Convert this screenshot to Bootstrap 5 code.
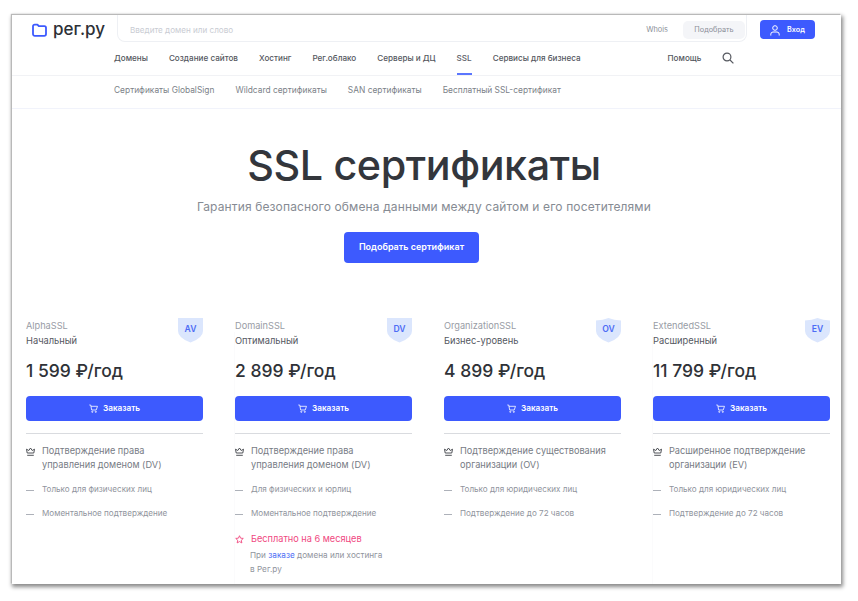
<!DOCTYPE html>
<html lang="ru"><head><meta charset="utf-8">
<link href="https://cdn.jsdelivr.net/npm/bootstrap@5.3.0/dist/css/bootstrap.min.css" rel="stylesheet">
<style>
html,body{height:100%;background:#fff;overflow:hidden}
body{font-family:Inter,"Liberation Sans",sans-serif;color:#2d3036;padding:15px 0 0 12px}
.shot{width:829px;height:569px;overflow:hidden;background:#fff;box-shadow:-1px -1px 1px #b9b9b9,1px 2px 4px 1px #8a8a8a}
.top-row{height:31px;padding-left:20px}
.logo{width:85px;font-size:17px;font-weight:500;line-height:1;gap:6px;color:#2d3036;margin-top:-2px}
.search-box{width:630px;height:27px;border:1px solid #eef0f4;border-top:0;border-radius:0 0 8px 8px;padding:6px 1px 2px 12px;font-size:8.100px;color:#c9ccd3}
.search-box .w{color:#8b8f98;margin-right:15px;font-size:7.400px}
.pick{background:#f4f5f8;color:#8b8f98;border-radius:5px;width:62px;height:18px;font-size:7.300px}
.enter{width:55px;height:19px;padding-top:1px;background:#3d5afe;color:#fff;border-radius:4px;margin-left:13px;margin-top:5px;font-size:7.200px;font-weight:600;gap:7px}
.main-nav{height:31px;padding-left:102px;border-bottom:1px solid #f1f2f5;font-size:8.150px;font-weight:500;color:#54575e;gap:21px;margin-top:-1px}
.main-nav span{line-height:27px;height:30px;white-space:nowrap}
.main-nav .on{color:#5c6068;border-bottom:1px solid #5b76fe;box-shadow:inset 0 -1px 0 #5b76fe}
.main-nav .help{margin-left:66px}
.main-nav .srch{height:25px}
.sub-nav{height:33px;padding-left:102px;border-bottom:1px solid #f1f3fb;font-size:8.400px;color:#7b7f88;gap:21px;line-height:29px}
.hero{text-align:center;height:209px;padding:28px 5px 0 0}
.hero h1{font-size:41.300px;font-weight:500;line-height:56px;letter-spacing:-.4px;margin:0;color:#33363c}
.hero p{font-size:12px;color:#868b93;margin:4px 0 0;line-height:20px;letter-spacing:.13px}
.cta{display:inline-block;width:135px;height:31px;line-height:29px;padding:0;margin:15px 25px 0 0;background:#3d5afe;border:0;border-radius:4px;font-size:9px;font-weight:600;color:#fff}
.plans{padding-left:14px;gap:0}
.plan{width:209px;padding-right:32px;height:300px;flex:none;position:relative}
.plan:nth-child(2){box-shadow:-15px 0 0 -14px #fbfbfc}
.plan:last-child{box-shadow:-18px 0 0 -17px #fbfbfc}
.plan-head{height:42px}
.brand{font-size:9.200px;color:#989ca5;line-height:15px}
.lvl{font-size:9.300px;color:#55585f;line-height:15px}
.shield{width:25px;height:25px;font-size:8.600px;font-weight:600;color:#4d6cf5;position:relative}
.shield svg{position:absolute;left:0;top:0}
.shield b{position:relative;font-weight:600;display:block;text-align:center;line-height:23px}
.price{font-size:17.500px;font-weight:500;line-height:22px;margin-top:0;color:#2f3237}
.buy{height:25px;padding:0;margin-top:14px;background:#3d5afe;border:0;border-radius:4px;color:#fff;font-size:8.200px;font-weight:600;gap:5px}
.sep{border-top:1px solid #d9dbdf;margin:12px 0 0;height:0;opacity:1}
.feat{font-size:9.200px;line-height:14.300px;color:#777b84;margin-top:10px;gap:7px}
.feat-ic{width:9px;flex:none;margin-top:3px}
.row-min{font-size:8.100px;line-height:12px;color:#90949d;gap:8px}
.row-min.f1{margin-top:10px}.row-min.f2{margin-top:12px}
.dash{width:8px;height:1px;background:#adb1b9;flex:none;margin-top:7px}
.free{font-size:9.200px;line-height:13px;color:#f0487f;margin-top:13px;gap:7px}
.note{font-size:8.200px;line-height:14.300px;color:#90949d;margin:3px 0 0 15px}
.note a{color:#4d6cf5;text-decoration:none}
</style></head><body>
<div class="shot">
<div class="top-row d-flex">
 <div class="logo d-flex align-items-center">
  <svg width="15" height="14" viewBox="0 0 15 14"><path d="M1 3.200a1.600 1.600 0 0 1 1.600-1.600h2.800l1.400 1.600h5.600A1.600 1.600 0 0 1 14 4.800v6.200a1.800 1.800 0 0 1-1.800 1.800H2.800A1.800 1.800 0 0 1 1 11z" fill="none" stroke="#3d5afe" stroke-width="1.800" stroke-linejoin="round"/></svg>
  <span>рег.ру</span>
 </div>
 <div class="search-box d-flex align-items-center">
  <span class="flex-grow-1">Введите домен или слово</span><span class="w">Whois</span>
  <span class="pick d-flex align-items-center justify-content-center">Подобрать</span>
 </div>
 <div class="enter d-flex align-items-center justify-content-center">
  <svg width="10" height="11" viewBox="0 0 10 11" fill="none" stroke="#fff" stroke-width="1"><circle cx="5" cy="3" r="2.300"/><path d="M.8 10.500V9.200A2.200 2.200 0 0 1 3 7h4a2.200 2.200 0 0 1 2.200 2.200v1.300"/></svg><span>Вход</span>
 </div>
</div>
<div class="main-nav d-flex">
 <span>Домены</span><span>Создание сайтов</span><span>Хостинг</span><span>Рег.облако</span><span>Серверы и ДЦ</span><span class="on">SSL</span><span>Сервисы для бизнеса</span><span class="help">Помощь</span>
 <span class="d-flex align-items-center srch"><svg width="12" height="12" viewBox="0 0 12 12" fill="none" stroke="#55585f" stroke-width="1.200"><circle cx="5" cy="5" r="3.900"/><path d="M8 8l3.400 3.400"/></svg></span>
</div>
<div class="sub-nav d-flex"><span>Сертификаты GlobalSign</span><span>Wildcard сертификаты</span><span>SAN сертификаты</span><span>Бесплатный SSL-сертификат</span></div>
<div class="hero">
 <h1>SSL сертификаты</h1>
 <p>Гарантия безопасного обмена данными между сайтом и его посетителями</p>
 <a class="btn cta" href="#">Подобрать сертификат</a>
</div>
<div class="plans d-flex">
 <div class="plan">
  <div class="plan-head d-flex justify-content-between"><div><div class="brand">AlphaSSL</div><div class="lvl">Начальный</div></div>
   <div class="shield"><svg width="25" height="25" viewBox="0 0 25 25"><path d="M0 0h25v13q0 7-12.500 11.500Q0 20 0 13z" fill="#dbe6fd"/></svg><b>AV</b></div></div>
  <div class="price">1 599 ₽/год</div>
  <a class="btn buy d-flex align-items-center justify-content-center" href="#"><svg width="9" height="9" viewBox="0 0 9 9" fill="none" stroke="#fff" stroke-width=".8"><path d="M.3 1h1.400l1 5h4.500L8.500 2.300H2"/><circle cx="3.300" cy="7.800" r=".6"/><circle cx="6.800" cy="7.800" r=".6"/></svg><span>Заказать</span></a>
  <hr class="sep">
  <div class="feat d-flex"><svg class="feat-ic" width="9" height="9" viewBox="0 0 9 9" fill="none" stroke="#3c3f45" stroke-width=".9"><path d="M1.200 6L.5 2.200l2.300 1.300L4.500 1l1.700 2.500 2.300-1.300L7.800 6z"/><path d="M1.200 8.300h6.600"/></svg><span>Подтверждение права<br>управления доменом (DV)</span></div>
  <div class="row-min f1 d-flex"><i class="dash"></i><span>Только для физических лиц</span></div>
  <div class="row-min f2 d-flex"><i class="dash"></i><span>Моментальное подтверждение</span></div>
 </div>
 <div class="plan">
  <div class="plan-head d-flex justify-content-between"><div><div class="brand">DomainSSL</div><div class="lvl">Оптимальный</div></div>
   <div class="shield"><svg width="25" height="25" viewBox="0 0 25 25"><path d="M0 0h25v13q0 7-12.500 11.500Q0 20 0 13z" fill="#dbe6fd"/></svg><b>DV</b></div></div>
  <div class="price">2 899 ₽/год</div>
  <a class="btn buy d-flex align-items-center justify-content-center" href="#"><svg width="9" height="9" viewBox="0 0 9 9" fill="none" stroke="#fff" stroke-width=".8"><path d="M.3 1h1.400l1 5h4.500L8.500 2.300H2"/><circle cx="3.300" cy="7.800" r=".6"/><circle cx="6.800" cy="7.800" r=".6"/></svg><span>Заказать</span></a>
  <hr class="sep">
  <div class="feat d-flex"><svg class="feat-ic" width="9" height="9" viewBox="0 0 9 9" fill="none" stroke="#3c3f45" stroke-width=".9"><path d="M1.200 6L.5 2.200l2.300 1.300L4.500 1l1.700 2.500 2.300-1.300L7.800 6z"/><path d="M1.200 8.300h6.600"/></svg><span>Подтверждение права<br>управления доменом (DV)</span></div>
  <div class="row-min f1 d-flex"><i class="dash"></i><span>Для физических и юрлиц</span></div>
  <div class="row-min f2 d-flex"><i class="dash"></i><span>Моментальное подтверждение</span></div>
  <div class="free d-flex"><svg class="feat-ic" width="9" height="9" viewBox="0 0 10 10" fill="none" stroke="#f0487f" stroke-width="1"><path d="M5 .8l1.200 2.700 3 .3-2.200 2 .6 3L5 7.300 2.400 8.800l.6-3-2.200-2 3-.3z"/></svg><span>Бесплатно на 6 месяцев</span></div>
  <div class="note"><span>При </span><a href="#">заказе</a><span> домена или хостинга</span><br><span>в Рег.ру</span></div>
 </div>
 <div class="plan">
  <div class="plan-head d-flex justify-content-between"><div><div class="brand">OrganizationSSL</div><div class="lvl">Бизнес-уровень</div></div>
   <div class="shield"><svg width="25" height="25" viewBox="0 0 25 25"><path d="M0 2.500Q7 2 12.500 0 18 2 25 2.500V13q0 7-12.500 11.500Q0 20 0 13z" fill="#dbe6fd"/></svg><b>OV</b></div></div>
  <div class="price">4 899 ₽/год</div>
  <a class="btn buy d-flex align-items-center justify-content-center" href="#"><svg width="9" height="9" viewBox="0 0 9 9" fill="none" stroke="#fff" stroke-width=".8"><path d="M.3 1h1.400l1 5h4.500L8.500 2.300H2"/><circle cx="3.300" cy="7.800" r=".6"/><circle cx="6.800" cy="7.800" r=".6"/></svg><span>Заказать</span></a>
  <hr class="sep">
  <div class="feat d-flex"><svg class="feat-ic" width="9" height="9" viewBox="0 0 9 9" fill="none" stroke="#3c3f45" stroke-width=".9"><path d="M1.200 6L.5 2.200l2.300 1.300L4.500 1l1.700 2.500 2.300-1.300L7.800 6z"/><path d="M1.200 8.300h6.600"/></svg><span>Подтверждение существования<br>организации (OV)</span></div>
  <div class="row-min f1 d-flex"><i class="dash"></i><span>Только для юридических лиц</span></div>
  <div class="row-min f2 d-flex"><i class="dash"></i><span>Подтверждение до 72 часов</span></div>
 </div>
 <div class="plan">
  <div class="plan-head d-flex justify-content-between"><div><div class="brand">ExtendedSSL</div><div class="lvl">Расширенный</div></div>
   <div class="shield"><svg width="25" height="25" viewBox="0 0 25 25"><path d="M0 2.500Q7 2 12.500 0 18 2 25 2.500V13q0 7-12.500 11.500Q0 20 0 13z" fill="#dbe6fd"/></svg><b>EV</b></div></div>
  <div class="price">11 799 ₽/год</div>
  <a class="btn buy d-flex align-items-center justify-content-center" href="#"><svg width="9" height="9" viewBox="0 0 9 9" fill="none" stroke="#fff" stroke-width=".8"><path d="M.3 1h1.400l1 5h4.500L8.500 2.300H2"/><circle cx="3.300" cy="7.800" r=".6"/><circle cx="6.800" cy="7.800" r=".6"/></svg><span>Заказать</span></a>
  <hr class="sep">
  <div class="feat d-flex"><svg class="feat-ic" width="9" height="9" viewBox="0 0 9 9" fill="none" stroke="#3c3f45" stroke-width=".9"><path d="M1.200 6L.5 2.200l2.300 1.300L4.500 1l1.700 2.500 2.300-1.300L7.800 6z"/><path d="M1.200 8.300h6.600"/></svg><span>Расширенное подтверждение<br>организации (EV)</span></div>
  <div class="row-min f1 d-flex"><i class="dash"></i><span>Только для юридических лиц</span></div>
  <div class="row-min f2 d-flex"><i class="dash"></i><span>Подтверждение до 72 часов</span></div>
 </div>
</div>
</div>
<script src="https://cdn.jsdelivr.net/npm/bootstrap@5.3.0/dist/js/bootstrap.bundle.min.js"></script>
</body></html>
